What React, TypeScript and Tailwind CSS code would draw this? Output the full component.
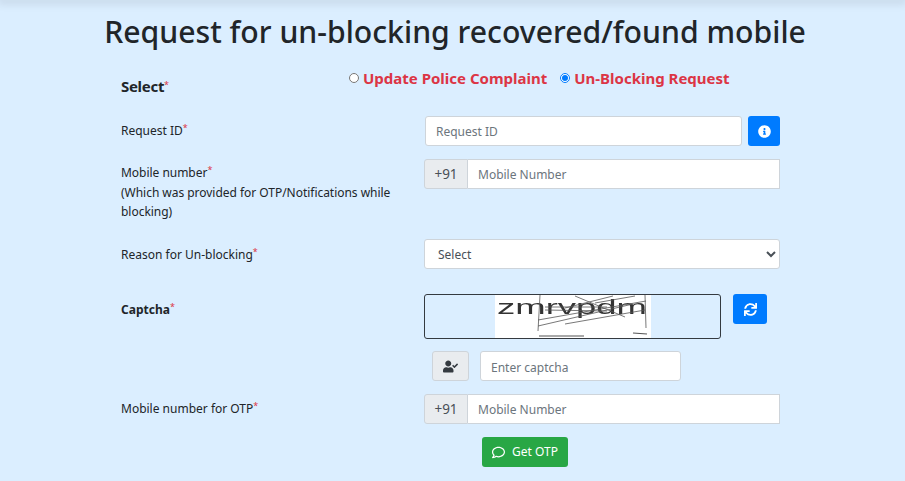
import { FaInfoCircle, FaSync, FaUserCheck, FaRegComment } from "react-icons/fa";

function Star() {
  return <sup className="relative -top-[4px] align-baseline text-[9px] leading-none font-normal text-[#dc3545]">*</sup>;
}

function PhoneField({ className }: { className: string }) {
  return (
    <div className={`flex h-[30px] ${className}`}>
      <span className="flex w-[44px] items-center justify-center rounded-l-[3px] border border-[#ced4da] bg-[#e9ecef] text-[13.5px] text-[#495057]">+91</span>
      <input
        placeholder="Mobile Number"
        className="min-w-0 flex-1 border border-l-0 border-[#ced4da] bg-white px-[10px] pt-[2px] text-[12px] text-[#495057] outline-none placeholder:text-[#6c757d]"
      />
    </div>
  );
}

function Captcha() {
  return (
    <svg viewBox="0 0 156 43" className="h-[43px] w-[156px] bg-white" style={{ filter: "blur(0.5px)" }}>
      <text x="2" y="18.5" fontFamily="'Liberation Sans', sans-serif" fontSize="20" fill="#333" textLength="150" lengthAdjust="spacingAndGlyphs">zmrvpdm</text>
      <g stroke="#555" strokeWidth="0.8" fill="none">
        <path d="M45 0 L43 36" />
        <path d="M150 0 L151 33" />
        <path d="M43 25 L151 6" />
        <path d="M43 31 L138 9" />
        <path d="M70 29 L150 15" />
        <path d="M80 1 L130 22" />
        <path d="M70 13 L118 1" />
        <path d="M100 8 L140 1" />
        <path d="M50 12 L112 12" />
        <path d="M50 15 L112 16" />
        <path d="M44 41 L89 41" strokeWidth="1.2" />
        <path d="M138 38 L152 39" strokeWidth="1.2" />
      </g>
    </svg>
  );
}

export default function App() {
  return (
    <div className="relative h-[481px] overflow-hidden bg-[#dbeeff] font-['Noto_Sans',sans-serif] text-[12px] text-[#212529]">
      <div className="h-0 shadow-[0_0_10px_3px_rgba(0,0,0,0.13)]" />
      <h1 className="pt-[11px] pl-[5px] text-center text-[30.2px] font-medium leading-[42px]">
        Request for un-blocking recovered/found mobile
      </h1>

      <div className="ml-[121px] w-[659px]">
        <div className="mt-[11px] flex h-[42px]">
          <div className="w-[228px] pt-[10px] text-[15px] font-bold leading-[24px] tracking-[-0.3px]">
            Select<Star />
          </div>
          <div className="flex items-start gap-[13px] pt-[3px] text-[15px] font-bold leading-[22px] text-[#dc3545]">
            <label className="flex items-center gap-[4px]">
              <input type="radio" name="mode" className="h-[10px] w-[10px] accent-[#007bff]" />
              Update Police Complaint
            </label>
            <label className="flex items-center gap-[4px]">
              <input type="radio" name="mode" defaultChecked className="h-[10px] w-[10px] accent-[#007bff]" />
              Un-Blocking Request
            </label>
          </div>
        </div>

        <div className="mt-[10px] flex h-[30px]">
          <div className="w-[304px] pt-[5px] leading-[19px]">Request ID<Star /></div>
          <input
            placeholder="Request ID"
            className="h-[30px] w-[317px] rounded-[3px] border border-[#ced4da] bg-white px-[10px] text-[12px] outline-none placeholder:text-[#6c757d]"
          />
          <button className="ml-[6px] flex h-[30px] w-[32px] items-center justify-center rounded-[3px] bg-[#007bff] text-[13px] text-white">
            <FaInfoCircle />
          </button>
        </div>

        <div className="mt-[13px] flex h-[80px]">
          <div className="w-[301px] pt-[4px] leading-[19.5px] tracking-[-0.03px]">
            Mobile number<Star />
            <br />
            (Which was provided for OTP/Notifications while blocking)
          </div>
          <div className="w-[2px]" />
          <PhoneField className="w-[356px]" />
        </div>

        <div className="flex h-[30px]">
          <div className="flex w-[303px] items-center leading-[19px]"><span>Reason for Un-blocking<Star /></span></div>
          <select className="h-[30px] w-[356px] rounded-[3px] border border-[#ced4da] bg-white px-[9px] text-[12px] text-[#495057] outline-none">
            <option>Select</option>
          </select>
        </div>

        <div className="mt-[25px] flex h-[45px]">
          <div className="w-[303px] pt-[6px] font-bold leading-[19px]">Captcha<Star /></div>
          <div className="flex h-[45px] w-[297px] justify-center overflow-hidden rounded-[3px] border border-[#343a40]">
            <Captcha />
          </div>
          <button className="ml-[12px] flex h-[30px] w-[34px] items-center justify-center rounded-[3px] bg-[#007bff] text-[13px] text-white">
            <FaSync />
          </button>
        </div>

        <div className="mt-[12px] ml-[311px] flex h-[30px]">
          <span className="flex h-[30px] w-[37px] items-center justify-center rounded-[3px] border border-[#ced4da] bg-[#e9ecef] text-[15px] text-[#343a40]">
            <FaUserCheck />
          </span>
          <input
            placeholder="Enter captcha"
            className="ml-[11px] h-[30px] w-[201px] rounded-[3px] border border-[#ced4da] bg-white px-[10px] pt-[2px] text-[12px] outline-none placeholder:text-[#6c757d]"
          />
        </div>

        <div className="mt-[13px] flex h-[30px]">
          <div className="w-[303px] pt-[5px] leading-[19px]">Mobile number for OTP<Star /></div>
          <PhoneField className="w-[356px]" />
        </div>

        <button className="mt-[13px] ml-[361px] flex h-[30px] w-[86px] items-center justify-center gap-[7px] rounded-[3px] bg-[#28a745] text-[12px] text-white">
          <FaRegComment className="text-[13px]" /> Get OTP
        </button>
      </div>
    </div>
  );
}
